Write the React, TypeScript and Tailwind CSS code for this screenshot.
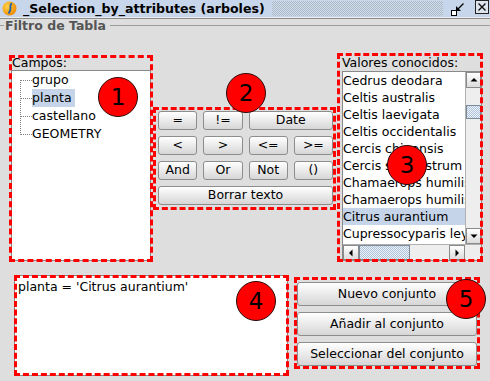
import type { ReactNode } from "react"

const fields = ["grupo", "planta", "castellano", "GEOMETRY"]

const values = [
  "Cedrus deodara",
  "Celtis australis",
  "Celtis laevigata",
  "Celtis occidentalis",
  "Cercis chinensis",
  "Cercis siliquastrum",
  "Chamaerops humilis",
  "Chamaerops humilis var. arborescens",
  "Citrus aurantium",
  "Cupressocyparis leylandii",
  "Cupressus arizonica",
]

// red annotation circles drawn over the screenshot
function Marker({ n, className }: { n: number; className: string }) {
  return (
    <div
      className={`pointer-events-none absolute flex h-[40px] w-[40px] items-center justify-center rounded-full border border-[#2a0a0a] bg-[#ff0000] text-[23px] leading-none text-black ${className}`}
    >
      {n}
    </div>
  )
}

function Dashed({ className }: { className: string }) {
  return <div className={`pointer-events-none absolute border-[3px] border-dashed border-[#ff0000] ${className}`} />
}

function Btn({ children, className = "" }: { children: ReactNode; className?: string }) {
  return (
    <button
      className={`flex items-center justify-center rounded-[3px] border border-[#8d8d8d] bg-linear-to-b from-white to-[#d6d6d6] text-[12.5px] leading-none text-black ${className}`}
    >
      {children}
    </button>
  )
}

function ArrowBtn({ dir, className = "" }: { dir: "up" | "down" | "left" | "right"; className?: string }) {
  const pts = {
    up: "1.5,6.5 8.5,6.5 5,3",
    down: "1.5,3.5 8.5,3.5 5,7",
    left: "6.5,1.5 6.5,8.5 3,5",
    right: "3.5,1.5 3.5,8.5 7,5",
  }[dir]
  return (
    <div
      className={`flex shrink-0 items-center justify-center border border-[#8a8a8a] bg-linear-to-b from-white to-[#dcdcdc] ${className}`}
    >
      <svg width="10" height="10" viewBox="0 0 10 10">
        <polygon points={pts} fill="#000" />
      </svg>
    </div>
  )
}

function TitleBar() {
  return (
    <div className="flex h-[17px] items-center bg-[#c7d6ea] pl-[2px]">
      <svg width="15" height="15" viewBox="0 0 15 15" className="shrink-0">
        <defs>
          <radialGradient id="ball" cx="0.35" cy="0.35" r="0.7">
            <stop offset="0" stopColor="#ffd24a" />
            <stop offset="1" stopColor="#f08a00" />
          </radialGradient>
        </defs>
        <circle cx="7.5" cy="7.5" r="7" fill="url(#ball)" />
        <path d="M10 2.5 C6 3.5, 11 7.5, 6.5 12.5" stroke="#1d5fb0" strokeWidth="1.7" fill="none" />
      </svg>
      <span className="ml-[6px] whitespace-nowrap text-[12.6px] font-bold leading-[17px] text-black">
        _Selection_by_attributes (arboles)
      </span>
      <div className="ml-[7px] h-[15px] flex-1 bg-[repeating-conic-gradient(#a9b6c8_0_25%,#d4dfec_0_50%)] bg-[length:2px_2px]" />
      <svg width="20" height="14" viewBox="0 0 20 14" className="ml-[5px] shrink-0">
        <rect x="3.5" y="8.5" width="5" height="5" fill="#fff" stroke="#000" />
        <line x1="9.5" y1="7.5" x2="15.5" y2="1.5" stroke="#000" strokeWidth="1.3" />
        <polygon points="8,9 8,4 13,9" fill="#000" />
      </svg>
      <div className="ml-[7px] mr-[1px] flex h-[14px] w-[14px] shrink-0 items-center justify-center self-start border border-[#222] bg-[#dde4ec]">
        <svg width="10" height="10" viewBox="0 0 10 10">
          <path d="M1.5 1.5 L8.5 8.5 M8.5 1.5 L1.5 8.5" stroke="#111" strokeWidth="1.4" />
        </svg>
      </div>
    </div>
  )
}

export default function App() {
  return (
    <div className="relative h-[381px] w-[490px] overflow-hidden bg-[#dedede] font-['DejaVu_Sans',sans-serif] text-black">
      <TitleBar />
      <div className="h-px bg-[#ececec]" />
      <div className="h-px bg-[#8c8c8c]" />

      {/* group title */}
      <div className="flex h-[14px] items-start">
        <div className="mt-[6px] h-px w-[4px] bg-[#9c9c9c]" />
        <span className="ml-[1px] text-[12.5px] font-bold leading-[14px] text-[#555]">Filtro de Tabla</span>
        <div className="ml-[4px] mt-[6px] h-px flex-1 bg-[#9c9c9c]" />
      </div>

      <div className="mt-[23px] flex items-start">
        {/* Campos */}
        <div className="relative ml-[11px] w-[140px]">
          <div className="h-[14px] pl-[1px] text-[12.5px] leading-[14px]">Campos:</div>
          <div className="flex h-[191px] items-start border border-[#8a8a8a] bg-white">
            <svg width="12" height="72" viewBox="0 0 12 72" className="ml-[8px] shrink-0">
              <g stroke="#808080" strokeDasharray="1 1" shapeRendering="crispEdges">
                <line x1="0.5" y1="9" x2="0.5" y2="64" />
                <line x1="1" y1="9.5" x2="12" y2="9.5" />
                <line x1="1" y1="27.5" x2="12" y2="27.5" />
                <line x1="1" y1="45.5" x2="12" y2="45.5" />
                <line x1="1" y1="63.5" x2="12" y2="63.5" />
              </g>
            </svg>
            <div className="flex flex-col items-start">
              {fields.map((f) => (
                <div
                  key={f}
                  className={`flex h-[18px] items-center pr-[3px] text-[12.5px] ${f === "planta" ? "bg-[#c5d4e8]" : ""}`}
                >
                  {f}
                </div>
              ))}
            </div>
          </div>
          <Dashed className="-left-[2px] -right-[2px] -top-[1px] -bottom-[1px]" />
          <Marker n={1} className="left-[87px] top-[21px]" />
        </div>

        {/* operators */}
        <div className="relative ml-[7px] mt-[55px] grid w-[175px] grid-cols-4 gap-[6px]">
          <Btn className="h-[19px]">=</Btn>
          <Btn className="h-[19px]">!=</Btn>
          <Btn className="col-span-2 h-[19px]">Date</Btn>
          <Btn className="h-[19px]">&lt;</Btn>
          <Btn className="h-[19px]">&gt;</Btn>
          <Btn className="h-[19px]">&lt;=</Btn>
          <Btn className="h-[19px]">&gt;=</Btn>
          <Btn className="h-[19px]">And</Btn>
          <Btn className="h-[19px]">Or</Btn>
          <Btn className="h-[19px]">Not</Btn>
          <Btn className="h-[19px]">()</Btn>
          <Btn className="col-span-4 h-[19px]">Borrar texto</Btn>
          <Dashed className="-left-[5px] -right-[3px] -top-[4px] -bottom-[5px]" />
          <Marker n={2} className="left-[68px] -top-[38px]" />
        </div>

        {/* Valores conocidos */}
        <div className="relative ml-[9px] w-[140px]">
          <div className="h-[15px] text-[12.5px] leading-[14px]">Valores conocidos:</div>
          <div className="flex h-[190px] flex-col border border-[#8a8a8a] bg-white">
            <div className="flex min-h-0 flex-1">
              <div className="min-w-0 flex-1 overflow-hidden">
                {values.map((v) => (
                  <div
                    key={v}
                    className={`h-[17px] whitespace-nowrap text-[12.5px] leading-[17px] ${v === "Citrus aurantium" ? "bg-[#c5d4e8]" : ""}`}
                  >
                    {v}
                  </div>
                ))}
              </div>
              <div className="flex w-[16px] flex-col border-l border-[#b0b0b0] bg-[#eeeeee]">
                <ArrowBtn dir="up" className="h-[16px]" />
                <div className="flex-1 pt-[17px]">
                  <div className="h-[14px] border border-[#7a8a99] bg-[repeating-conic-gradient(#eef3f9_0_25%,#aec2da_0_50%)] bg-[length:2px_2px]" />
                </div>
                <ArrowBtn dir="down" className="h-[16px]" />
              </div>
            </div>
            <div className="flex h-[16px] border-t border-[#b0b0b0] bg-[#eeeeee]">
              <ArrowBtn dir="left" className="w-[16px]" />
              <div className="flex flex-1">
                <div className="w-[51px] border border-[#7a8a99] bg-[repeating-conic-gradient(#eef3f9_0_25%,#aec2da_0_50%)] bg-[length:2px_2px]" />
              </div>
              <ArrowBtn dir="right" className="w-[16px]" />
              <div className="w-[16px]" />
            </div>
          </div>
          <Dashed className="-left-[5px] -right-[1px] -top-[3px] -bottom-[1px]" />
          <Marker n={3} className="left-[45px] top-[89px]" />
        </div>
      </div>

      <div className="mt-[14px] flex items-start">
        {/* expression */}
        <div className="relative ml-[14px] h-[101px] w-[274px] border border-[#8a8a8a] bg-white pl-[3px] pt-[3px]">
          <div className="whitespace-nowrap text-[12.5px] leading-[15px]">planta = 'Citrus aurantium'</div>
          <Dashed className="-left-[1px] -right-[2px] -top-[1px] -bottom-[1px]" />
          <Marker n={4} className="left-[221px] top-[5px]" />
        </div>

        {/* selection buttons */}
        <div className="relative ml-[9px] mt-[7px] flex w-[180px] flex-col gap-[6px]">
          <Btn className="h-[24px]">Nuevo conjunto</Btn>
          <Btn className="h-[24px]">Añadir al conjunto</Btn>
          <Btn className="h-[24px]">Seleccionar del conjunto</Btn>
          <Dashed className="-left-[3px] -right-[3px] -top-[5px] -bottom-[3px]" />
          <Marker n={5} className="left-[149px] -top-[3px]" />
        </div>
      </div>
    </div>
  )
}
